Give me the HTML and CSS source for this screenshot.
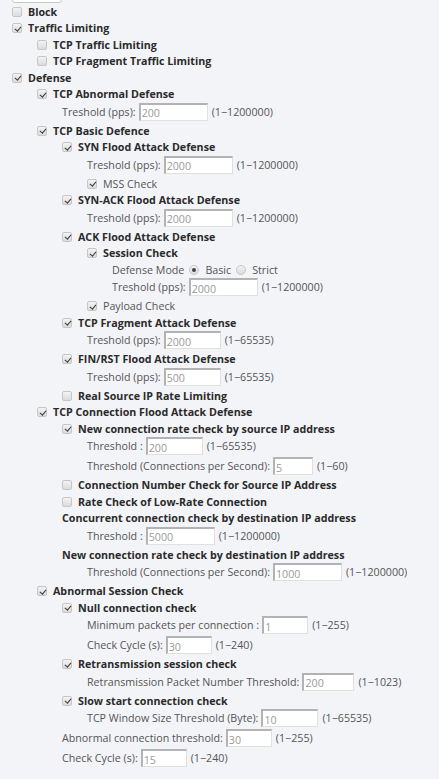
FILE: index.html
```html
<!DOCTYPE html>
<html lang="en">
<head>
  <meta charset="UTF-8" />
  <title>Defense Settings</title>
  <link rel="stylesheet" href="styles.css">
</head>
<body>
  <div class="page">
    <button class="top-btn" type="button"></button>

    <label class="opt"><input type="checkbox" /> Block</label>
    <label class="opt"><input type="checkbox" checked /> Traffic Limiting</label>
    <div class="sub">
      <label class="opt"><input type="checkbox" /> TCP Traffic Limiting</label>
      <label class="opt"><input type="checkbox" /> TCP Fragment Traffic Limiting</label>
    </div>

    <label class="opt"><input type="checkbox" checked /> Defense</label>
    <div class="sub">
      <label class="opt"><input type="checkbox" checked /> TCP Abnormal Defense</label>
      <div class="sub">
        <div class="field"><span>Treshold (pps):</span><input class="w68" type="text" value="200" /><span class="range">(1−1200000)</span></div>
      </div>

      <label class="opt"><input type="checkbox" checked /> TCP Basic Defence</label>
      <div class="sub">
        <label class="opt"><input type="checkbox" checked /> SYN Flood Attack Defense</label>
        <div class="sub">
          <div class="field"><span>Treshold (pps):</span><input class="w68" type="text" value="2000" /><span class="range">(1−1200000)</span></div>
          <label class="opt plain"><input type="checkbox" checked /> MSS Check</label>
        </div>

        <label class="opt"><input type="checkbox" checked /> SYN-ACK Flood Attack Defense</label>
        <div class="sub">
          <div class="field"><span>Treshold (pps):</span><input class="w68" type="text" value="2000" /><span class="range">(1−1200000)</span></div>
        </div>

        <label class="opt"><input type="checkbox" checked /> ACK Flood Attack Defense</label>
        <div class="sub">
          <label class="opt"><input type="checkbox" checked /> Session Check</label>
          <div class="sub">
            <div class="mode">
              <span>Defense Mode</span>
              <input type="radio" name="mode" checked /><span>Basic</span>
              <input type="radio" name="mode" /><span>Strict</span>
            </div>
            <div class="field"><span>Treshold (pps):</span><input class="w68" type="text" value="2000" /><span class="range">(1−1200000)</span></div>
          </div>
          <label class="opt plain"><input type="checkbox" checked /> Payload Check</label>
        </div>

        <label class="opt"><input type="checkbox" checked /> TCP Fragment Attack Defense</label>
        <div class="sub">
          <div class="field"><span>Treshold (pps):</span><input class="w57" type="text" value="2000" /><span class="range">(1−65535)</span></div>
        </div>

        <label class="opt"><input type="checkbox" checked /> FIN/RST Flood Attack Defense</label>
        <div class="sub">
          <div class="field"><span>Treshold (pps):</span><input class="w57" type="text" value="500" /><span class="range">(1−65535)</span></div>
        </div>

        <label class="opt"><input type="checkbox" /> Real Source IP Rate Limiting</label>
      </div>

      <label class="opt"><input type="checkbox" checked /> TCP Connection Flood Attack Defense</label>
      <div class="sub">
        <label class="opt"><input type="checkbox" checked /> New connection rate check by source IP address</label>
        <div class="sub">
          <div class="field"><span>Threshold :</span><input class="w57" type="text" value="200" /><span class="range">(1−65535)</span></div>
          <div class="field"><span>Threshold (Connections per Second):</span><input class="w40" type="text" value="5" /><span class="range">(1−60)</span></div>
        </div>
        <label class="opt"><input type="checkbox" /> Connection Number Check for Source IP Address</label>
        <label class="opt"><input type="checkbox" /> Rate Check of Low-Rate Connection</label>

        <div class="heading">Concurrent connection check by destination IP address</div>
        <div class="sub">
          <div class="field"><span>Threshold :</span><input class="w68" type="text" value="5000" /><span class="range">(1−1200000)</span></div>
        </div>

        <div class="heading">New connection rate check by destination IP address</div>
        <div class="sub">
          <div class="field"><span>Threshold (Connections per Second):</span><input class="w68" type="text" value="1000" /><span class="range">(1−1200000)</span></div>
        </div>
      </div>

      <label class="opt"><input type="checkbox" checked /> Abnormal Session Check</label>
      <div class="sub">
        <label class="opt"><input type="checkbox" checked /> Null connection check</label>
        <div class="sub">
          <div class="field"><span>Minimum packets per connection :</span><input class="w46" type="text" value="1" /><span class="range">(1−255)</span></div>
          <div class="field"><span>Check Cycle (s):</span><input class="w46" type="text" value="30" /><span class="range">(1−240)</span></div>
        </div>

        <label class="opt"><input type="checkbox" checked /> Retransmission session check</label>
        <div class="sub">
          <div class="field"><span>Retransmission Packet Number Threshold:</span><input class="w52" type="text" value="200" /><span class="range">(1−1023)</span></div>
        </div>

        <label class="opt"><input type="checkbox" checked /> Slow start connection check</label>
        <div class="sub">
          <div class="field"><span>TCP Window Size Threshold (Byte):</span><input class="w57" type="text" value="10" /><span class="range">(1−65535)</span></div>
        </div>

        <div class="field"><span>Abnormal connection threshold:</span><input class="w46" type="text" value="30" /><span class="range">(1−255)</span></div>
        <div class="field"><span>Check Cycle (s):</span><input class="w46" type="text" value="15" /><span class="range">(1−240)</span></div>
      </div>
    </div>
  </div>
</body>
</html>
```

FILE: styles.css
```css
body {
  margin: 0;
  background-color: #f3f4f8;
  font-family: "Open Sans", Arial, sans-serif;
  font-size: 10.7px;
  color: #555;
}

.page {
  padding-left: 12px;
}

.top-btn {
  display: block;
  width: 50px;
  height: 20px;
  margin-top: -17px;
  margin-bottom: 0.5px;
  padding: 0;
  background: #fff;
  border: 1px solid #c9c9c9;
  border-radius: 3px;
}

.sub {
  padding-left: 25px;
}

.opt {
  display: flex;
  align-items: center;
  gap: 6px;
  height: 16.5px;
  font-weight: 700;
  color: #2b2b2b;
  white-space: nowrap;
}

.opt.plain {
  font-weight: 400;
  color: #555;
}

.heading {
  height: 16.5px;
  line-height: 16.5px;
  font-weight: 700;
  color: #2b2b2b;
  white-space: nowrap;
}

.field {
  display: flex;
  align-items: center;
  gap: 3px;
  height: 18px;
  margin-bottom: 2px;
  white-space: nowrap;
}

.field input {
  box-sizing: border-box;
  height: 18px;
  margin: 0;
  padding: 2px 1px 0;
  font-family: "Open Sans", Arial, sans-serif;
  font-size: 10.7px;
  color: #9a9a9a;
  background: #fff;
  border: 1px solid #e0e0e0;
  border-top: 2px solid #b3b3b3;
  border-left: 2px solid #b3b3b3;
  outline: none;
}

.w40 { width: 40px; }
.w46 { width: 46px; }
.w52 { width: 52px; }
.w57 { width: 57px; }
.w68 { width: 69px; }

.range {
  margin-left: 1px;
}

.mode {
  display: flex;
  align-items: center;
  height: 16.5px;
  white-space: nowrap;
}

input[type="checkbox"],
input[type="radio"] {
  appearance: none;
  -webkit-appearance: none;
  box-sizing: border-box;
  position: relative;
  flex: none;
  width: 10px;
  height: 10px;
  margin: 0;
  border: 1px solid #c6c6c6;
  background: linear-gradient(#f3f3f3, #dcdcdc);
}

input[type="checkbox"] {
  border-radius: 2px;
}

input[type="checkbox"]:checked::after {
  content: "";
  position: absolute;
  left: 2.5px;
  top: 0.5px;
  width: 2.5px;
  height: 5px;
  border: solid #3a3a3a;
  border-width: 0 1.5px 1.5px 0;
  transform: rotate(40deg);
}

input[type="radio"] {
  border-radius: 50%;
  margin: 0 6px 0 5px;
}

input[type="radio"]:checked::after {
  content: "";
  position: absolute;
  left: 2px;
  top: 2px;
  width: 4px;
  height: 4px;
  border-radius: 50%;
  background: #444;
}
```
